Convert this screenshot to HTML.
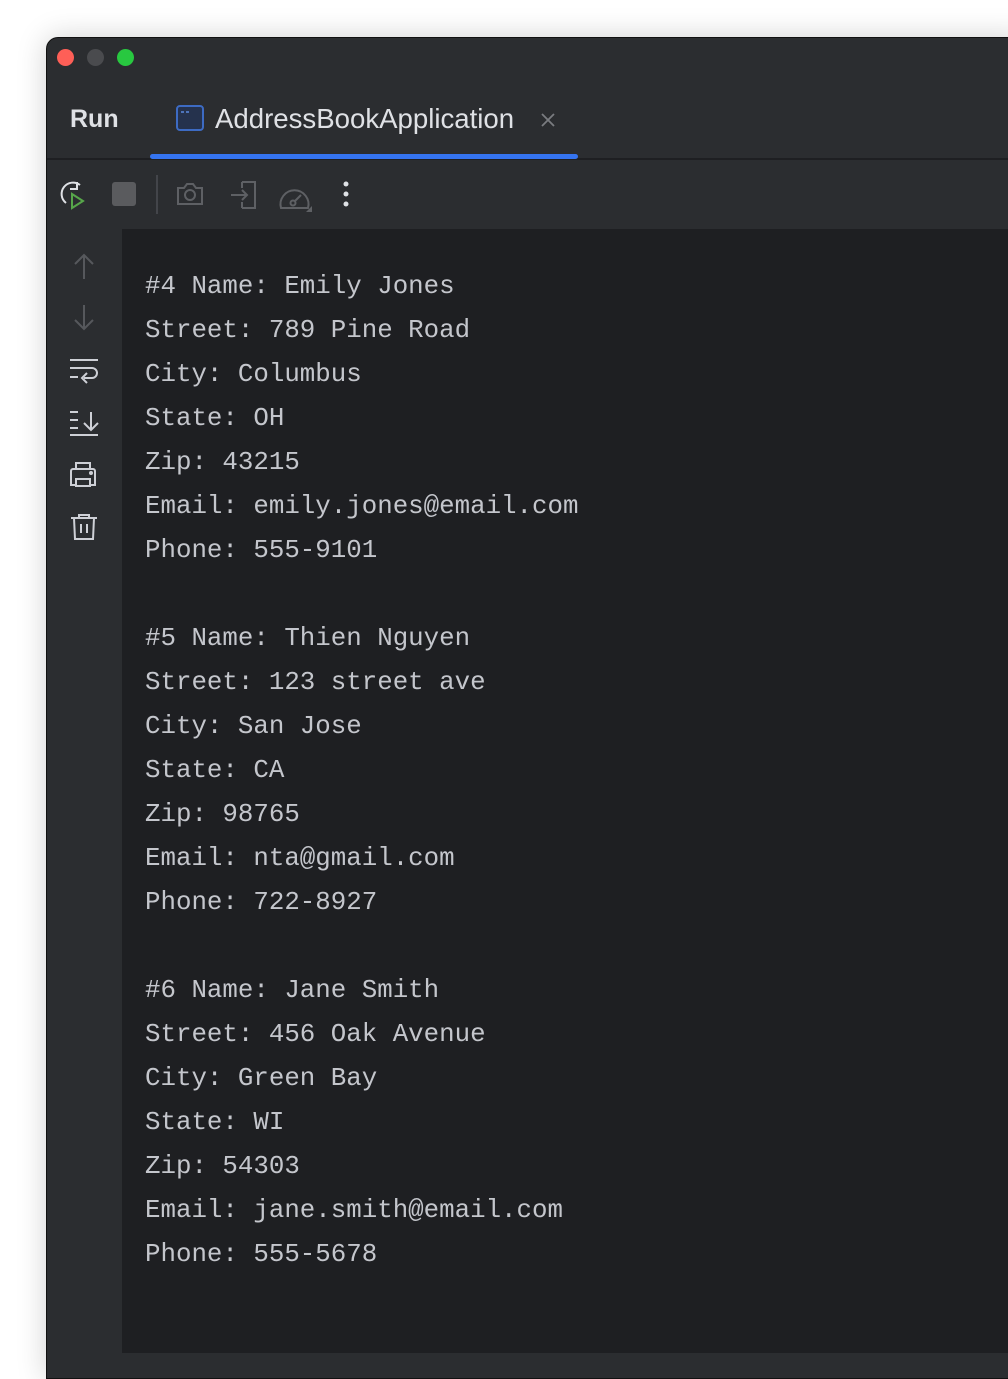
<!DOCTYPE html>
<html><head><meta charset="utf-8"><style>
html,body{margin:0;padding:0;width:1008px;height:1353px;overflow:hidden;background:#fff;font-family:"Liberation Sans",sans-serif}
.win{position:absolute;left:46px;top:37px;width:980px;height:1340px;background:#2b2d30;border-radius:12px 0 0 0;border:1px solid #111;box-shadow:0 0 30px rgba(0,0,0,.18)}
.dot{position:absolute;top:49px;width:17px;height:17px;border-radius:50%}
.run{position:absolute;left:70px;top:105px;font-size:25px;font-weight:bold;color:#dfe1e5}
.tab{position:absolute;left:215px;top:103px;font-size:27.6px;color:#dfe1e5}
.sep{position:absolute;left:47px;right:0;top:158px;height:2px;background:#1e1f22}
.ul{position:absolute;left:150px;top:154px;width:428px;height:5px;border-radius:3px;background:#3574f0}
.gut{position:absolute;left:47px;top:229px;width:75px;height:1124px;background:#2b2d30}
.con{position:absolute;left:122px;top:229px;right:0;height:1124px;background:#1e1f22}
pre{position:absolute;left:145px;top:265px;margin:0;font-family:"Liberation Mono","DejaVu Sans Mono",monospace;font-size:25.8px;line-height:44px;color:#c4c6cc}
svg{position:absolute;overflow:visible}
</style></head><body>
<div class="win"></div>
<div class="dot" style="left:57px;background:#fe5f57"></div>
<div class="dot" style="left:87px;background:#4a4b4e"></div>
<div class="dot" style="left:117px;background:#28c840"></div>
<div class="run">Run</div>
<svg style="left:176px;top:105px" width="28" height="26"><rect x="1" y="1" width="26" height="24" rx="3" fill="#25324d" stroke="#3d6bc3" stroke-width="2"/><line x1="5" y1="7" x2="8" y2="7" stroke="#5b8be0" stroke-width="1.5"/><line x1="10" y1="7" x2="13" y2="7" stroke="#5b8be0" stroke-width="1.5"/></svg>
<div class="tab">AddressBookApplication</div>
<svg style="left:541px;top:113px" width="14" height="14"><path d="M1 1L13 13M13 1L1 13" stroke="#7a7c80" stroke-width="1.8"/></svg>
<div class="sep"></div>
<div class="ul"></div>
<svg style="left:58px;top:180px" width="30" height="30" fill="none" stroke-width="2"><path d="M22 5A11 11 0 1 0 8 23" stroke="#dfe1e5"/><path d="M19 2v7h-7" stroke="#dfe1e5"/><path d="M14 14l11 7-11 7z" stroke="#57a64a"/></svg>
<div style="position:absolute;left:112px;top:182px;width:24px;height:24px;border-radius:3px;background:#5a5b5e"></div>
<div style="position:absolute;left:156px;top:175px;width:2px;height:39px;background:#43454a"></div>
<svg style="left:176px;top:180px" width="28" height="28" fill="none" stroke="#5e6064" stroke-width="2"><path d="M2 8h6l3-4h6l3 4h6v16H2z"/><circle cx="14" cy="15" r="5"/></svg>
<svg style="left:230px;top:180px" width="28" height="30" fill="none" stroke="#5e6064" stroke-width="2"><path d="M12 2h13v26H12M12 2v6M12 28v-6"/><path d="M1 15h16M12 10l5 5-5 5"/></svg>
<svg style="left:278px;top:182px" width="36" height="32" fill="none" stroke="#5e6064" stroke-width="2"><path d="M3 26A14 14 0 1 1 30 26z"/><circle cx="15" cy="21" r="2.5"/><path d="M17 19l6-6"/><path d="M34 24v6h-6z" fill="#5e6064" stroke="none"/></svg>
<svg style="left:340px;top:180px" width="10" height="30" fill="#dfe1e5"><circle cx="6" cy="4" r="2.5"/><circle cx="6" cy="14" r="2.5"/><circle cx="6" cy="24" r="2.5"/></svg>
<div class="gut"></div>
<div class="con"></div>
<svg style="left:72px;top:253px" width="24" height="26" fill="none" stroke="#56585c" stroke-width="2"><path d="M12 2v24M3 11l9-9 9 9"/></svg>
<svg style="left:72px;top:305px" width="24" height="26" fill="none" stroke="#56585c" stroke-width="2"><path d="M12 0v24M3 15l9 9 9-9"/></svg>
<svg style="left:70px;top:358px" width="30" height="26" fill="none" stroke="#ced0d6" stroke-width="2"><path d="M0 2h28M0 10h22a5 5 0 0 1 0 10h-8M0 19h8M17 15l-5 5 5 5"/></svg>
<svg style="left:70px;top:410px" width="30" height="26" fill="none" stroke="#ced0d6" stroke-width="2"><path d="M0 2h8M0 10h8M0 18h8M0 25h28M21 2v18M14 13l7 7 7-7"/></svg>
<svg style="left:69px;top:461px" width="30" height="26" fill="none" stroke="#ced0d6" stroke-width="2"><path d="M7 8V2h14v6M7 24H2V10a2 2 0 0 1 2-2h20a2 2 0 0 1 2 2v14h-5M7 18h14v7H7z"/><circle cx="22" cy="12" r="1" fill="#ced0d6"/></svg>
<svg style="left:71px;top:512px" width="26" height="30" fill="none" stroke="#ced0d6" stroke-width="2"><path d="M0 6h26M8 6V3h10v3M3 6l1 21h18l1-21M10 12v9M16 12v9"/></svg>
<pre>#4 Name: Emily Jones
Street: 789 Pine Road
City: Columbus
State: OH
Zip: 43215
Email: emily.jones@email.com
Phone: 555-9101

#5 Name: Thien Nguyen
Street: 123 street ave
City: San Jose
State: CA
Zip: 98765
Email: nta@gmail.com
Phone: 722-8927

#6 Name: Jane Smith
Street: 456 Oak Avenue
City: Green Bay
State: WI
Zip: 54303
Email: jane.smith@email.com
Phone: 555-5678</pre>
</body></html>
